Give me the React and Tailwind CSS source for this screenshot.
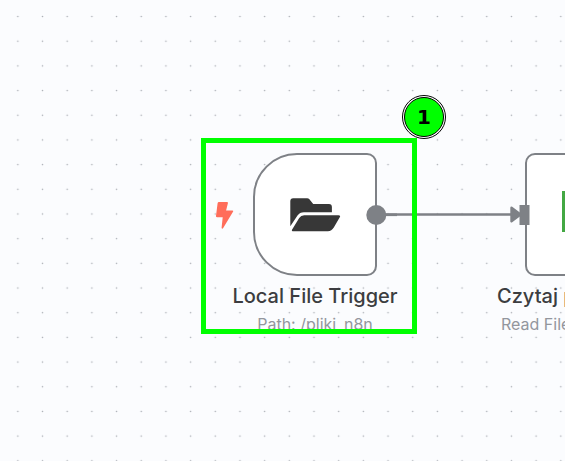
function DotGrid() {
  return (
    <svg className="absolute inset-0 h-full w-full" aria-hidden="true">
      <defs>
        <pattern id="dots" x="5.5" y="4.2" width="24.68" height="24.68" patternUnits="userSpaceOnUse">
          <circle cx="12.34" cy="12.34" r="0.8" fill="#a9adb3" />
        </pattern>
      </defs>
      <rect width="100%" height="100%" fill="url(#dots)" />
    </svg>
  );
}

function FolderIcon() {
  return (
    <svg className="h-9 w-13" viewBox="289 197 52 36" fill="#373737" aria-hidden="true">
      <path d="M290.3 226.3V201.2Q290.3 198.3 293.2 198.3H307.2Q308.4 198.3 309.2 199.1L313.2 204H329Q331.9 204 331.9 207V212.2H304Q299.6 212.2 297.5 215.6Z" />
      <path d="M304.2 215.2H338.6Q340.8 215.2 339.9 217L333.8 227.6Q331.6 231.3 327.9 231.3H292.9Q291.3 231.3 292 229.7L299.2 218Q300.9 215.2 304.2 215.2Z" />
    </svg>
  );
}

function BoltIcon() {
  return (
    <svg className="h-7 w-5" viewBox="215 200 20 28" fill="#ff6d5a" aria-hidden="true">
      <path d="M218.9 201.1H227Q228.2 201.1 227.9 202.3L226.1 209.4H232.3Q233.8 209.5 233 210.8L223.2 227Q222 228.4 221.6 226.8L222.7 216.2H217.1Q215.9 216.1 216 215L217.6 202.2Q217.8 201.1 218.9 201.1Z" />
    </svg>
  );
}

function Edge() {
  return (
    <svg className="absolute top-[200px] left-[360px] h-[30px] w-[176px]" viewBox="360 200 176 30" fill="#7e8186" aria-hidden="true">
      <path d="M376 214.5H514" stroke="#7e8186" strokeWidth="2.4" />
      <path d="M376 214.8H397" stroke="#7e8186" strokeWidth="2.6" />
      <circle cx="376.3" cy="215" r="10" />
      <path d="M511.5 207.8L520.5 214.5L511.5 221.2Z" stroke="#7e8186" strokeWidth="2.4" strokeLinejoin="round" />
      <rect x="519.5" y="205" width="10" height="20" />
    </svg>
  );
}

function Captions({ title, subtitle }) {
  return (
    <>
      <h2 className="mt-2 text-xl leading-6 font-medium text-[#3c3d40]">{title}</h2>
      <p className="mt-1 text-base leading-6 text-[#93969d]">{subtitle}</p>
    </>
  );
}

export default function App() {
  return (
    <main className="relative h-screen w-full overflow-hidden bg-[#fbfcfe] font-['Inter',sans-serif]">
      <DotGrid />
      <section className="absolute top-[153px] left-[215px] flex w-[200px] flex-col items-center whitespace-nowrap">
        <div className="flex w-full items-center gap-[18px]">
          <BoltIcon />
          <div className="flex h-[123px] w-[124px] items-center justify-center rounded-l-[44px] rounded-r-[10px] border-2 border-[#7e8186] bg-white">
            <FolderIcon />
          </div>
        </div>
        <Captions title="Local File Trigger" subtitle="Path: /pliki_n8n" />
      </section>
      <section className="absolute top-[153px] left-[497px] flex flex-col whitespace-nowrap">
        <div className="ml-7 flex h-[123px] w-[124px] items-center justify-center rounded-[10px] border-2 border-[#7e8186] bg-white pb-1.5">
          <div className="h-[41px] w-[50px] bg-[#43a843]" />
        </div>
        <Captions title="Czytaj p" subtitle={<span className="pl-1">Read File</span>} />
      </section>
      <Edge />
      <div className="absolute top-[138px] left-[201px] h-[196px] w-[216px] border-5 border-[#00ff00]" />
      <div className="absolute top-[95px] left-[402px] flex size-11 rounded-full border border-black bg-white p-px">
        <div className="flex flex-1 items-center justify-center rounded-full border border-black bg-[#00ff00] font-['DejaVu_Sans',sans-serif] text-xl leading-none font-bold text-black">
          1
        </div>
      </div>
    </main>
  );
}
